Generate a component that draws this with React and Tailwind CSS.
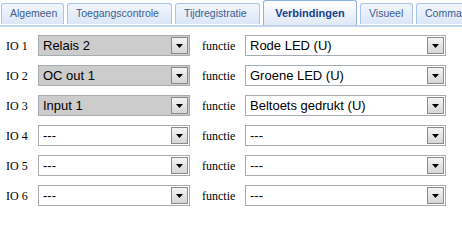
import React from "react";

const tabs = [
  { label: "Algemeen", w: 63 },
  { label: "Toegangscontrole", w: 105 },
  { label: "Tijdregistratie", w: 85 },
  { label: "Verbindingen", w: 94, active: true },
  { label: "Visueel", w: 53 },
  { label: "Commandos", w: 60 },
];

const rows = [
  { io: "IO 1", a: "Relais 2", b: "Rode LED (U)", gray: true },
  { io: "IO 2", a: "OC out 1", b: "Groene LED (U)", gray: true },
  { io: "IO 3", a: "Input 1", b: "Beltoets gedrukt (U)", gray: true },
  { io: "IO 4", a: "---", b: "---" },
  { io: "IO 5", a: "---", b: "---" },
  { io: "IO 6", a: "---", b: "---" },
];

function Select({ value, gray, width }) {
  return (
    <div
      className={`flex h-[21px] items-stretch border border-[#a5acb2] ${gray ? "bg-[#cccccc]" : "bg-white"}`}
      style={{ width }}
    >
      <div className="flex flex-1 items-center overflow-hidden whitespace-nowrap pl-[4px] text-[13px] leading-none text-black [font-family:'Liberation_Sans',Arial,sans-serif]">
        {value}
      </div>
      <div className="m-[1px] flex w-[17px] items-center justify-center border border-[#8a8a8a] bg-gradient-to-b from-[#f4f4f4] to-[#d6d6d6]">
        <svg width="7" height="4" viewBox="0 0 7 4">
          <path d="M0 0H7L3.5 4Z" fill="#000" />
        </svg>
      </div>
    </div>
  );
}

export default function App() {
  return (
    <div className="h-[215px] w-[462px] overflow-hidden bg-white">
      <div className="flex h-[27px] items-end gap-[3px] overflow-hidden border-b-2 border-[#c3d6ef] pl-[1px]">
        {tabs.map((t) =>
          t.active ? (
            <div
              key={t.label}
              className="flex h-[25px] shrink-0 items-center justify-center rounded-t-[3px] border border-b-0 border-[#8db2e3] bg-gradient-to-b from-[#ffffff] to-[#dfe8f6] text-[11px] font-bold text-[#15428b] [font-family:'Liberation_Sans',Arial,sans-serif]"
              style={{ width: t.w }}
            >
              {t.label}
            </div>
          ) : (
            <div
              key={t.label}
              className="mb-[1px] flex h-[21px] shrink-0 items-center justify-start whitespace-nowrap rounded-t-[3px] border border-b-0 border-[#a9c4e8] bg-gradient-to-b from-[#f2f6fd] to-[#dbe6f7] pl-[8px] text-[10.5px] text-[#3d5d8f] [font-family:'Liberation_Sans',Arial,sans-serif]"
              style={{ width: t.w }}
            >
              {t.label}
            </div>
          )
        )}
      </div>
      <div className="flex flex-col gap-[9px] pt-[8px]">
        {rows.map((r) => (
          <div key={r.io} className="flex items-center">
            <div className="w-[38px] pl-[6px] text-[12px] text-black [font-family:'Liberation_Serif','Times_New_Roman',serif]">
              {r.io}
            </div>
            <Select value={r.a} gray={r.gray} width={152} />
            <div className="w-[55px] pl-[12px] text-[12px] text-black [font-family:'Liberation_Serif','Times_New_Roman',serif]">
              functie
            </div>
            <Select value={r.b} width={201} />
          </div>
        ))}
      </div>
    </div>
  );
}
